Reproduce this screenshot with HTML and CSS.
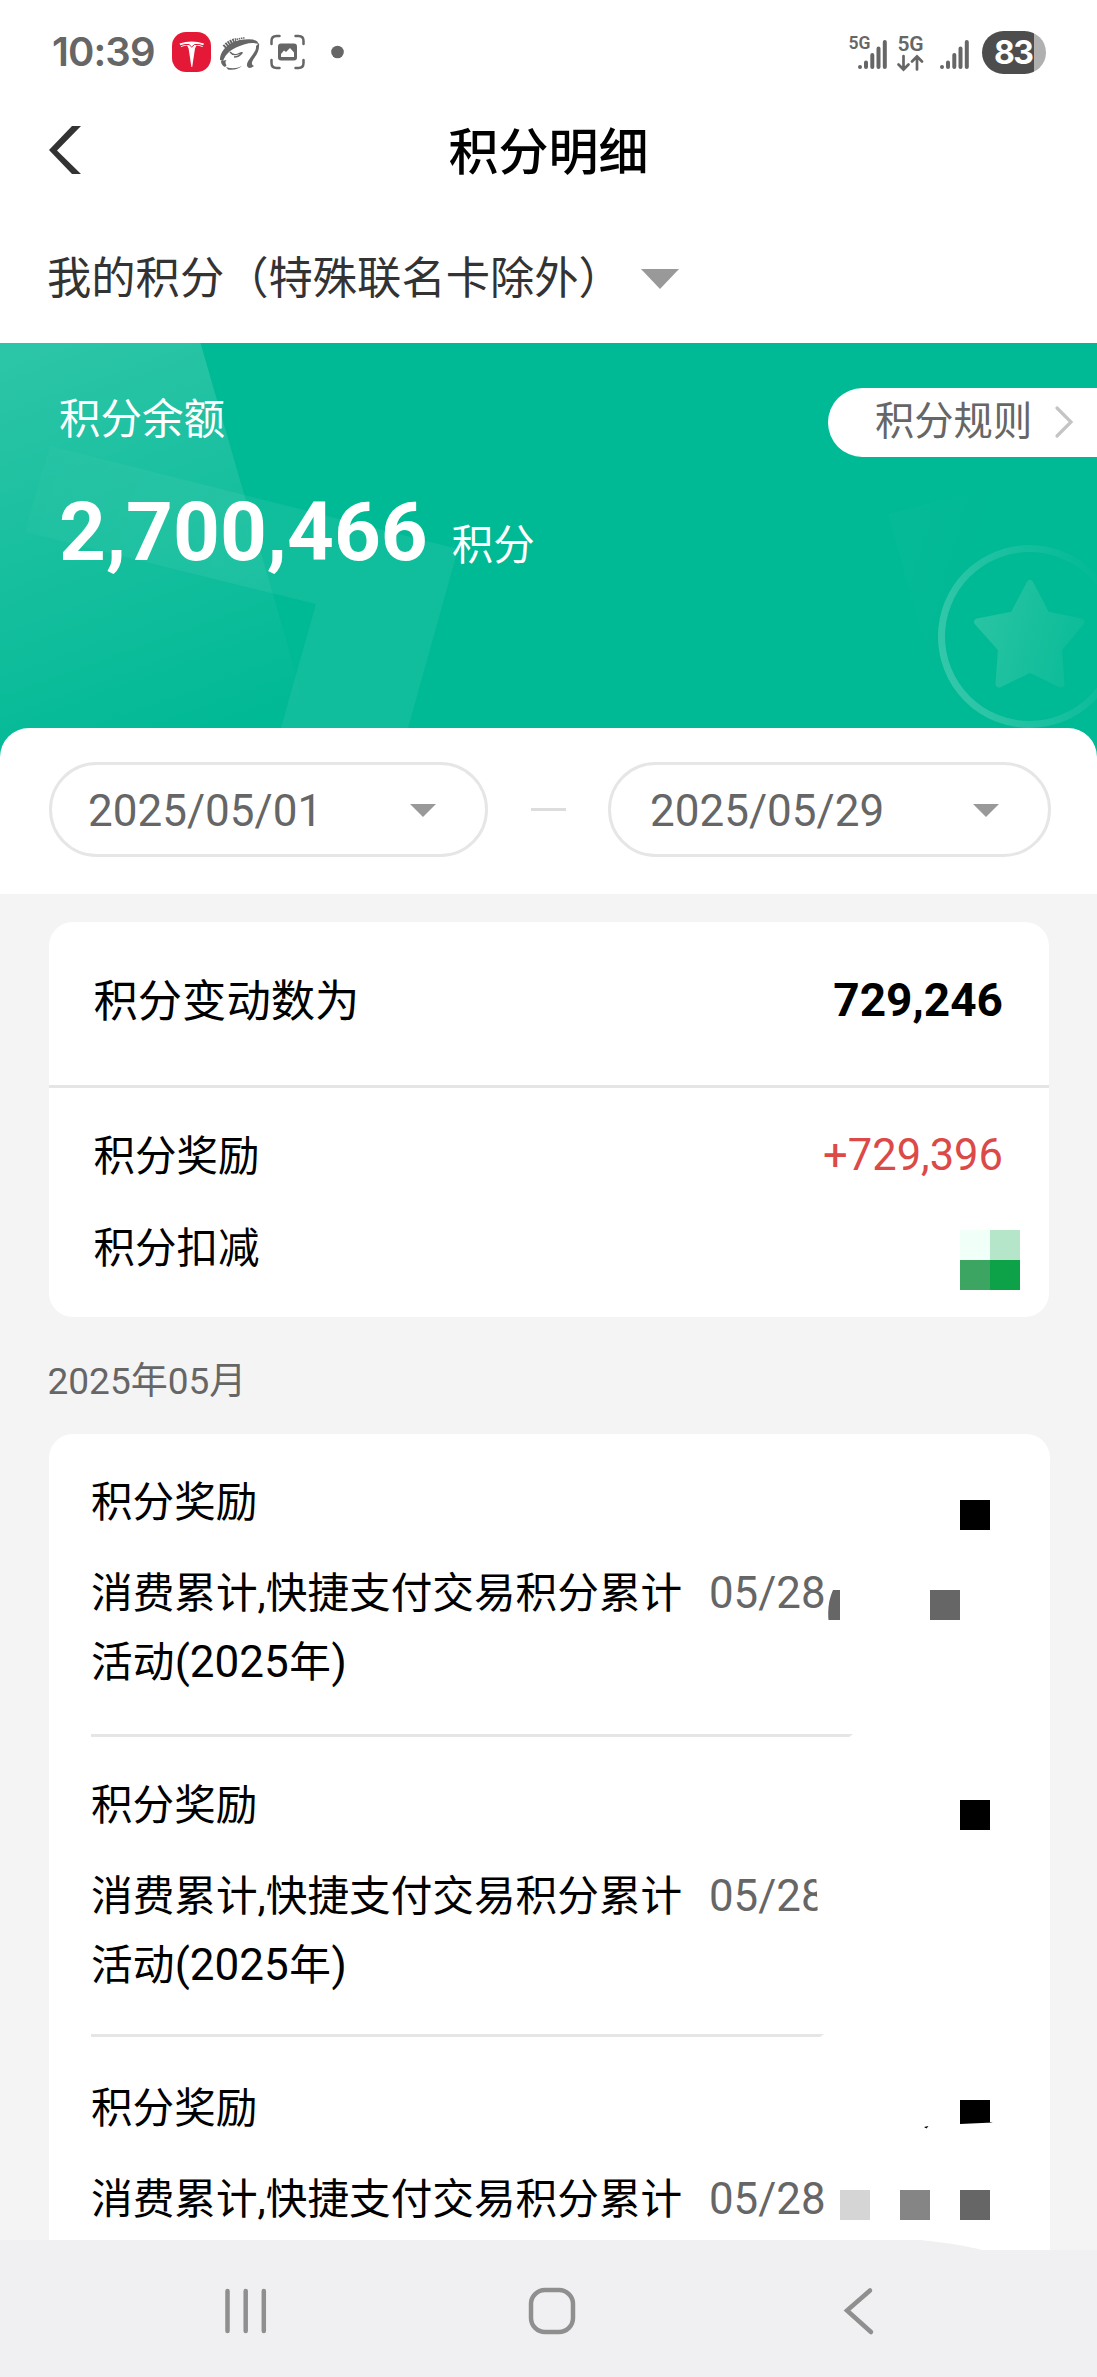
FILE: index.html
```html
<!DOCTYPE html>
<html lang="zh-CN">
<head>
<meta charset="utf-8">
<title>积分明细</title>
<link rel="stylesheet" href="styles.css">
</head>
<body>
<header class="status">
  <span class="time">10:39</span>
  <svg class="status-left" width="180" height="50" viewBox="170 27 180 50">
    <rect x="172" y="32" width="39" height="40" rx="14" fill="#e31937"/>
    <path d="M179.500 43.500q12-4 24.500 0l-1.500 3.500q-3-1.500-6-1.500l-1.500 3-2.800 18.500h-.8l-2.800-18.500-1.500-3q-3 0-6 1.500z" fill="#fff"/>
    <path d="M179.500 46q6-2.300 9.500-1.500l2.700 2.500 2.800-2.500q4-.8 9.500 1.500" stroke="#e31937" fill="none"/>
    <g fill="#666"><path d="M220 60C220 49 232 40 244 39.500Q257 38 258.500 44Q253 42 244 44.500C232 48 226 53 223 61z"/><path d="M259 43Q260 51 253.500 59Q250 65 254 66Q249 70 247 66C246 60 257 53 256 46z"/><path d="M221 61l5.500-1q-2 2 0 5.500l-1.500 1.500q-4-2-4-6z"/><path d="M226 67q8 3 16-1-5 4.500-14 3.500z"/></g>
    <path d="M230 52q3 4 8 2t4-1q-3 4-8 4" fill="none" stroke="#666" stroke-width="1.300"/>
    <path d="M224 47Q230 41 236 40" fill="none" stroke="#666" stroke-width="4" stroke-dasharray="1.800 .800"/>
    <path d="M236.500 39.500Q241 38 245 38" fill="none" stroke="#666" stroke-width="1.500" stroke-dasharray="1.500 .700"/>
    <path d="M271.500 44v-3q0-5 5-5h3M295.500 36h3q5 0 5 5v3M303.500 60v3q0 5-5 5h-3M279.500 68h-3q-5 0-5-5v-3" fill="none" stroke="#666" stroke-width="2.500" stroke-linecap="round"/>
    <rect x="278" y="43.500" width="19" height="17" rx="3" fill="#666"/>
    <path d="M281 57v-3l3-3.500 2 1.500 4-4 4 4.500V57z" fill="#fff"/>
    <circle cx="337.500" cy="52" r="6.300" fill="#666"/>
  </svg>
  <div class="network">
    <svg width="125" height="50" viewBox="848 27 125 50">
      <g stroke="#666" stroke-width="4" stroke-linecap="round"><path d="M860 67v0M866 62.500v4.500M872.300 55v12M878.500 48.500v18.500M884.800 42v25"/><path d="M942 67v0M948 62.500v4.500M954.300 55v12M960.500 48.500v18.500M966.800 42v25"/></g>
      <path d="M903.500 56v13M898.500 64.500l5 5 5-5M917 69.500V57M912 61.500l5-5 5 5" stroke="#666" stroke-width="2.700" stroke-linecap="round" fill="none"/>
      <g fill="#666" font-family="Roboto, sans-serif" font-weight="600"><text x="848.500" y="49" font-size="18" textLength="22" lengthAdjust="spacingAndGlyphs">5G</text><text x="897.500" y="51" font-size="21" textLength="26">5G</text></g>
    </svg>
    <span class="battery">83</span>
  </div>
</header>
<nav class="titlebar">
  <svg width="34" height="50" viewBox="48 125 34 50"><path d="M49 150L72 126H81L57 150.500 81 174H72z" fill="#333"/></svg>
  <h1>积分明细</h1>
</nav>
<div class="account">我的积分（特殊联名卡除外）<i class="caret wide"></i></div>
<section class="hero">
  <svg class="hero-art" width="1097" height="415" viewBox="0 343 1097 415">
    <defs>
      <linearGradient id="a" gradientUnits="userSpaceOnUse" x1="60" y1="343" x2="205" y2="745"><stop stop-color="#fff" stop-opacity=".17"/><stop offset="1" stop-color="#fff" stop-opacity="0"/></linearGradient>
      <linearGradient id="b" gradientUnits="userSpaceOnUse" x1="30" y1="480" x2="260" y2="540"><stop stop-color="#fff" stop-opacity=".02"/><stop offset="1" stop-color="#fff" stop-opacity=".065"/></linearGradient>
      <linearGradient id="c" gradientUnits="userSpaceOnUse" x1="940" y1="650" x2="1115" y2="600"><stop stop-color="#fff" stop-opacity=".2"/><stop offset="1" stop-color="#fff" stop-opacity="0"/></linearGradient>
      <linearGradient id="e" gradientUnits="userSpaceOnUse" x1="970" y1="630" x2="1105" y2="665"><stop stop-color="#29c4a3"/><stop offset="1" stop-color="#04ba96"/></linearGradient>
      <linearGradient id="d" gradientUnits="userSpaceOnUse" x1="895" y1="550" x2="980" y2="575"><stop stop-color="#fff" stop-opacity=".02"/><stop offset="1" stop-color="#fff" stop-opacity="0"/></linearGradient>
    </defs>
    <path d="M0 343H200.500L320 758H0z" fill="url(#a)"/>
    <path d="M50 446L458 549 408 728H281L316 604 25 532z" fill="url(#b)"/>
    <path d="M888 514L1010 483 1000 650 930 665z" fill="url(#d)"/>
    <circle cx="1029.500" cy="636.500" r="88" fill="none" stroke="url(#c)" stroke-width="7"/>
    <path d="M1030 583.500L1046.500 615 1081 622 1058.500 649 1061 684 1030 669 999 684 1001.500 649 977.500 622 1013.500 615z" fill="url(#e)" stroke="url(#e)" stroke-width="7" stroke-linejoin="round"/>
  </svg>
  <div class="balance">
    <div class="balance-label">积分余额</div>
    <div class="balance-value"><b>2,700,466</b><span>积分</span></div>
  </div>
  <a class="rules">积分规则<svg width="20" height="34" viewBox="0 0 20 34"><path d="M3 3l14 14L3 31" fill="none" stroke="#c4c4c4" stroke-width="3.200" stroke-linecap="round"/></svg></a>
</section>
<section class="range">
  <div class="date"><span>2025/05/01</span><i class="caret"></i></div>
  <i class="dash"></i>
  <div class="date end"><span>2025/05/29</span><i class="caret"></i></div>
</section>
<main>
  <section class="card summary">
    <div class="total"><span class="name">积分变动数为</span><b>729,246</b></div>
    <div class="line"><span class="name">积分奖励</span><span class="plus">+729,396</span></div>
    <div class="line"><span class="name">积分扣减</span></div>
    <div class="mosaic"><i></i><i></i><i></i><i></i></div>
  </section>
  <h2>2025年05月</h2>
  <section class="card list">
    <article>
      <h3>积分奖励</h3>
      <div class="detail"><p>消费累计,快捷支付交易积分累计<br>活动<span class="num">(2025</span>年<span class="num">)</span></p><time>05/28</time></div>
      <hr>
    </article>
    <article class="second">
      <h3>积分奖励</h3>
      <div class="detail"><p>消费累计,快捷支付交易积分累计<br>活动<span class="num">(2025</span>年<span class="num">)</span></p><time>05/28</time></div>
      <hr>
    </article>
    <article>
      <h3>积分奖励</h3>
      <div class="detail"><p>消费累计,快捷支付交易积分累计<br>活动<span class="num">(2025</span>年<span class="num">)</span></p><time>05/28</time></div>
    </article>
    <svg class="blocks" width="250" height="806" viewBox="800 1434 250 806">
      <path d="M816 1870l2 50h12v-50z" fill="#fff"/>
      <path d="M960 1500h30v30h-30zM960 1800h30v30h-30zM960 2100h30v22l3 .500-33 1.500zM924 2127l4.500-1-2 2.500z"/>
      <path d="M930 1590h30v30h-30zM840 1590v30h-11.500q-1.500-17 4.500-30zM960 2190h30v30h-30z" fill="#666"/>
      <path d="M840 2190h30v30h-30z" fill="#d5d5d5"/><path d="M900 2190h30v30h-30z" fill="#858585"/>
    </svg>
  </section>
</main>
<footer>
  <svg width="1097" height="137" viewBox="0 2240 1097 137">
    <path d="M920 2240Q960 2244 982 2250H1050V2240z" fill="#fff"/><path d="M1050 2240h47v10h-47z" fill="#f4f4f4"/>
    <g fill="none" stroke="#8f8f8f" stroke-width="4.500" stroke-linecap="round">
      <path d="M227.500 2291v40M245.700 2291v40M263.800 2291v40"/>
      <rect x="531" y="2290" width="42" height="42" rx="14"/>
      <path d="M870 2290.500L847 2310.500 871 2332"/>
    </g>
  </svg>
</footer>
</body>
</html>
```
FILE: styles.css
```css
* { box-sizing: border-box; margin: 0; padding: 0; }
body {
  width: 1097px; height: 2377px; overflow: hidden;
  display: flex; flex-direction: column;
  background: #fff; color: #000;
  font-family: Roboto, "Noto Sans CJK SC", sans-serif;
  font-size: 41.5px;
}
svg { display: block; flex: none; }
i { display: block; }

.status { height: 104px; flex: none; display: flex; align-items: center; padding: 0 51px 0 52px; }
.time { width: 118px; font: 600 40px/50px Inter, sans-serif; color: #666; letter-spacing: -.9px; }
.network { margin-left: auto; display: flex; align-items: center; gap: 9px; }
.battery {
  width: 64px; height: 43px; border-radius: 22px; padding-left: 12px;
  background: linear-gradient(90deg, #4d4d4d 52px, #b0b0b0 52px);
  color: #fff; font: 700 32px/44px Inter, sans-serif; letter-spacing: -1.5px;
}
.titlebar { height: 92px; flex: none; display: grid; grid-template-columns: 34px 1fr 34px; align-items: center; padding: 0 48px; }
.titlebar h1 { padding-top: 5px; text-align: center; font-size: 50px; font-weight: 500; line-height: 60px; }
.account { height: 147px; flex: none; display: flex; align-items: center; padding: 18px 0 0 47px; font-size: 44.3px; line-height: 60px; color: #333; }
.caret { border: solid transparent; border-width: 13px 13px 0; border-top-color: #999; }
.caret.wide { border-width: 20px 19px 0; margin-left: 18px; }

.hero { height: 415px; flex: none; position: relative; background: #00b995; display: flex; justify-content: space-between; color: #fff; }
.hero-art { position: absolute; left: 0; top: 0; }
.balance { position: relative; padding: 47px 0 0 59px; }
.balance-label { line-height: 60px; }
.balance-value { display: flex; align-items: baseline; gap: 24px; line-height: 100px; margin-top: 32px; }
.balance-value b { font-size: 81.800px; line-height: 100px; }
.rules {
  position: relative; margin-top: 45px; width: 269px; height: 69px; padding: 0 23px 2px 47px;
  border-radius: 35px 0 0 35px; background: #fff; color: #666;
  display: flex; align-items: center; justify-content: space-between; font-size: 39.3px; line-height: 60px;
}
/* The panel's rounded top overlaps the green banner. */
.range {
  height: 166px; margin-top: -30px; flex: none; position: relative; background: #fff; border-radius: 29px 29px 0 0;
  display: flex; align-items: flex-start; justify-content: space-between; padding: 34px 46px 0 49px;
}
.date {
  width: 439px; height: 95px; border: 3px solid #e6e6e6; border-radius: 48px;
  display: flex; align-items: center; justify-content: space-between; padding: 2px 49px 0 36px;
  color: #666; font-size: 44px;
}
.date.end { width: 443px; padding-left: 39px; }
.dash { width: 35px; height: 3px; margin-top: 46px; background: #ddd; }

main { flex: 1; min-height: 0; padding: 28px 47px 0 48.500px; background: #f4f4f4; }
.card { position: relative; background: #fff; border-radius: 24px; }
.summary { height: 395px; margin-right: 1px; }
.total { height: 166px; border-bottom: 3px solid #e5e5e5; padding: 0 46px 8px 45px; display: flex; align-items: center; justify-content: space-between; font-size: 44.3px; }
.total b { font-size: 46px; }
.name { margin-bottom: 4px; }
.line { height: 92px; padding: 0 46px 0 45px; display: flex; align-items: center; justify-content: space-between; }
.total + .line { height: 92px; margin-top: 21px; }
.plus { color: #dc4a48; font-size: 43.5px; }
.mosaic { position: absolute; left: 911.5px; top: 308px; display: grid; grid-template-columns: 30px 30px; grid-auto-rows: 30px; }
.mosaic i:nth-child(1) { background: #f0fff8; }
.mosaic i:nth-child(2) { background: #b5e6c9; }
.mosaic i:nth-child(3) { background: #3ca562; }
.mosaic i:nth-child(4) { background: #0da247; }
h2 { height: 117px; line-height: 130px; font-size: 37px; font-weight: 400; color: #666; margin-left: -1px; }

.list { height: 820px; padding: 34px 0 0 42.5px; border-radius: 24px 24px 0 0; }
article { height: 303px; }
h3 { font-size: 41.6px; font-weight: 400; line-height: 70px; }
.detail { display: flex; height: 138px; margin-top: 21px; line-height: 69px; }
.detail p { width: 600px; font-size: 41.65px; white-space: nowrap; }
.num { display: inline-block; font-size: 44px; line-height: 1; margin: 0 .5px; }
.detail time { margin-left: 18px; font-size: 43.8px; color: #666; }
hr { width: 762px; height: 3px; border: 0; margin-top: 37px; background: #e5e5e5; clip-path: polygon(0 0, 100% 0, calc(100% - 4px) 100%, 0 100%); }
.second hr { width: 733px; margin-top: 34px; }
.blocks { position: absolute; left: 751.5px; top: 0; }
footer { position: relative; height: 137px; flex: none; background: #f0f0f2; }
```
